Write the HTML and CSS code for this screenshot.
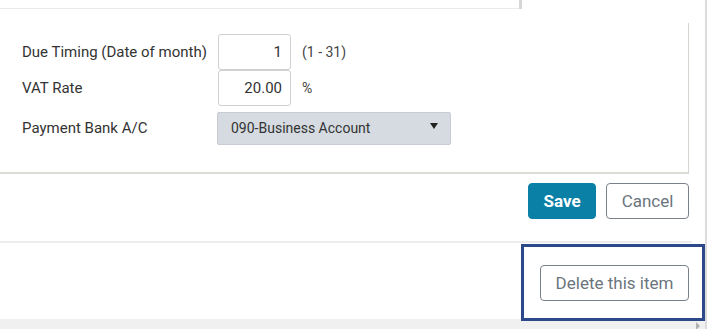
FILE: index.html
```html
<!DOCTYPE html>
<html lang="en">
<head>
  <meta charset="UTF-8">
  <meta name="viewport" content="width=device-width, initial-scale=1.0">
  <link rel="stylesheet" href="styles.css">
  <title>Settings</title>
</head>
<body>

  <div class="page">
    <div class="top">
      <div class="top-line"></div>
      <div class="top-tab"></div>
    </div>

    <div class="card">
      <div class="row">
        <label class="label">Due Timing (Date of month)</label>
        <input class="num" type="text" value="1">
        <span class="hint">(1 - 31)</span>
      </div>
      <div class="row">
        <label class="label">VAT Rate</label>
        <input class="num" type="text" value="20.00">
        <span class="hint">%</span>
      </div>
      <div class="row row-select">
        <label class="label">Payment Bank A/C</label>
        <div class="select">
          <span>090-Business Account</span>
          <span class="caret"></span>
        </div>
      </div>
    </div>

    <div class="actions">
      <button class="btn btn-primary">Save</button>
      <button class="btn btn-outline">Cancel</button>
    </div>

    <div class="footer">
      <button class="btn btn-outline btn-delete">Delete this item</button>
    </div>

    <div class="hscroll">
      <span class="arrow"></span>
    </div>
  </div>

  <div class="highlight"></div>

</body>
</html>
```

FILE: styles.css
```css
body {
  margin: 0;
  font-family: Roboto, 'Liberation Sans', sans-serif;
  background: #fff;
  color: #333;
  width: 718px;
  height: 329px;
  overflow: hidden;
  position: relative;
}

.page {
  width: 705px;
  height: 329px;
  border-right: 2px solid #dcdcdc;
  display: flex;
  flex-direction: column;
}

.top {
  height: 23px;
  display: flex;
  align-items: flex-start;
}

.top-line {
  width: 519px;
  height: 8px;
  border-bottom: 1px solid #ebebeb;
}

.top-tab {
  width: 3px;
  height: 9px;
  background: #d6d6d6;
}

.card {
  margin-right: 16px;
  height: 139px;
  padding-top: 11px;
  border-right: 1px solid #d6d6d0;
  border-bottom: 2px solid #dcdcd6;
}

.row {
  display: flex;
  align-items: center;
  height: 36px;
}

.row-select {
  height: 33px;
  margin-top: 6px;
}

.label {
  width: 196px;
  padding-left: 22px;
  font-size: 15px;
  color: #333;
}

.num {
  box-sizing: border-box;
  width: 73px;
  height: 36px;
  border: 1px solid #d0d0d0;
  border-radius: 3px;
  padding: 0 8px;
  text-align: right;
  font-family: inherit;
  font-size: 15px;
  color: #333;
  margin: 0;
}

.hint {
  margin-left: 11px;
  font-size: 14px;
  color: #444;
}

.select {
  box-sizing: border-box;
  width: 234px;
  height: 33px;
  margin-left: -1px;
  background: #d5dbe1;
  border: 1px solid #c6ccd2;
  border-radius: 2px;
  display: flex;
  align-items: center;
  justify-content: space-between;
  padding: 0 12px 0 13px;
  font-size: 14px;
  color: #333;
}

.caret {
  width: 0;
  height: 0;
  border-left: 4px solid transparent;
  border-right: 4px solid transparent;
  border-top: 6px solid #222;
  margin-top: -4px;
}

.actions {
  display: flex;
  justify-content: flex-end;
  gap: 10px;
  padding: 9px 3px 0 0;
  height: 58px;
  margin-right: 13px;
  border-bottom: 2px solid #ececec;
}

.btn {
  height: 36px;
  border-radius: 4px;
  font-family: inherit;
  font-size: 17px;
  padding: 0 10px;
  cursor: pointer;
}

.btn-primary {
  width: 68px;
  background: #0a80a6;
  border: 1px solid #0a80a6;
  color: #fff;
  font-weight: bold;
}

.btn-outline {
  background: #fff;
  border: 1px solid #7b8189;
  color: #6c757d;
}

.btn-outline:not(.btn-delete) {
  width: 83px;
}

.footer {
  display: flex;
  justify-content: flex-end;
  padding: 22px 16px 0 0;
  height: 54px;
}

.btn-delete {
  width: 149px;
}

.hscroll {
  height: 10px;
  background: #f0f0f0;
  position: relative;
}

.arrow {
  position: absolute;
  right: 5px;
  top: 3px;
  width: 0;
  height: 0;
  border-top: 4px solid transparent;
  border-bottom: 4px solid transparent;
  border-left: 4px solid #b0b0b0;
}

.highlight {
  position: absolute;
  left: 521px;
  top: 244px;
  width: 178px;
  height: 71px;
  border: 3px solid #2c4a89;
}
```
